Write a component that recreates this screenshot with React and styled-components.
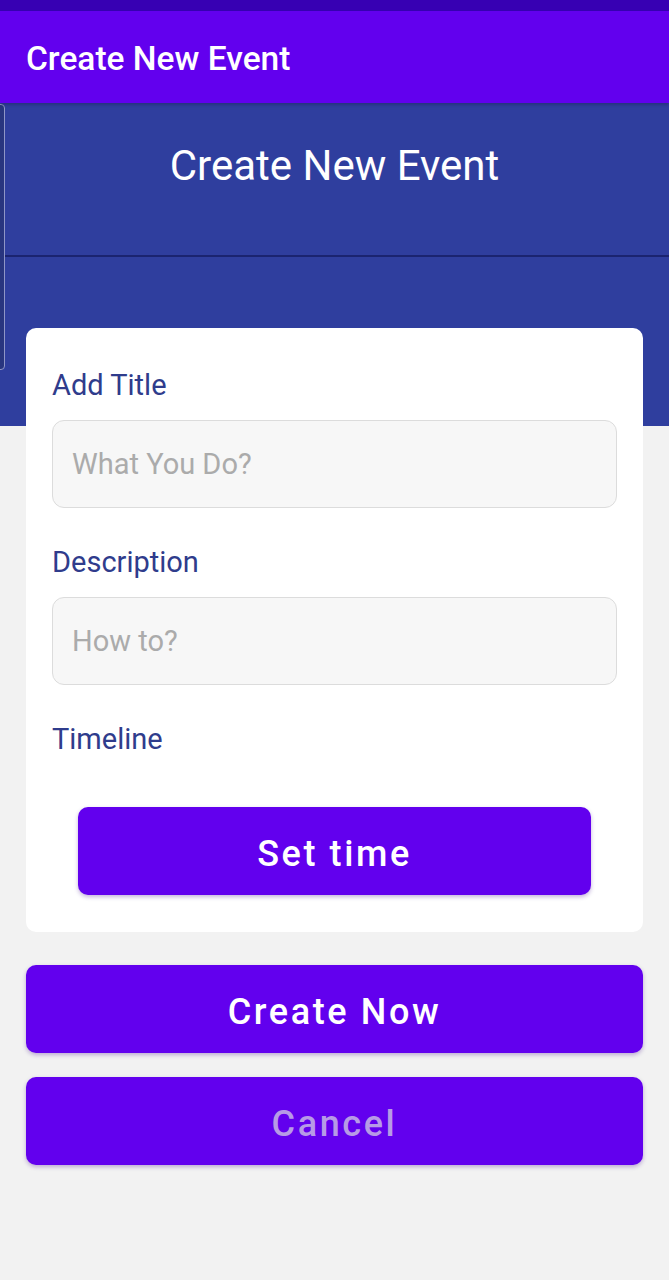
import React from "react";
import styled, { createGlobalStyle } from "styled-components";

const Global = createGlobalStyle`
  html, body { margin: 0; padding: 0; background: #f2f2f2; }
  body { font-family: Roboto, "Noto Sans", "Liberation Sans", sans-serif; }
  * { box-sizing: border-box; }
`;

const Page = styled.div`
  width: 669px;
  min-height: 1280px;
  background: #f2f2f2;
  display: flex;
  flex-direction: column;
`;

const StatusBar = styled.div`
  height: 11px;
  background: #3700b3;
`;

const AppBar = styled.header`
  height: 92px;
  background: #6200ee;
  display: flex;
  align-items: center;
  padding: 3px 0 0 26px;
  color: #fff;
  font-size: 33.5px;
  font-weight: 500;
  box-shadow: 0 2px 3px rgba(0, 0, 0, 0.2);
  position: relative;
  z-index: 2;
`;

const Hero = styled.section`
  position: relative;
  height: 323px;
  background: #2f3e9e;
  display: flex;
  flex-direction: column;
`;

const HeroTitle = styled.h1`
  margin: 0;
  height: 152px;
  padding-top: 38px;
  text-align: center;
  color: #fff;
  font-size: 42px;
  font-weight: 400;
  line-height: 50px;
`;

const Divider = styled.div`
  height: 2px;
  background: #1b2470;
`;

const EdgeTab = styled.div`
  position: absolute;
  left: -5px;
  top: 1px;
  width: 10px;
  height: 266px;
  border: 1px solid #8e95c6;
  border-radius: 4px;
  background: #28357f;
`;

const Body = styled.main`
  padding: 0 26px;
  display: flex;
  flex-direction: column;
  margin-top: -98px;
  position: relative;
`;

const Card = styled.div`
  background: #fff;
  border-radius: 10px;
  padding: 41px 26px 37px;
  display: flex;
  flex-direction: column;
`;

const Label = styled.label`
  display: block;
  color: #2f3c8c;
  font-size: 29px;
  line-height: 32px;
  margin-bottom: ${(p) => p.$gap}px;
`;

const Input = styled.input`
  width: 100%;
  height: 88px;
  background: #f7f7f7;
  border: 1.5px solid #dcdcdc;
  border-radius: 12px;
  padding: 0 19px;
  font-family: inherit;
  font-size: 29px;
  color: #333;
  margin-bottom: 38px;
  outline: none;
  &::placeholder { color: #ababab; }
`;

const Button = styled.button`
  height: 88px;
  margin: ${(p) => p.$margin};
  padding: 6px 0 0;
  border: none;
  border-radius: 10px;
  background: #6200ee;
  color: ${(p) => (p.$muted ? "#b79ae6" : "#fff")};
  font-family: inherit;
  font-size: 36px;
  font-weight: 500;
  letter-spacing: 2.6px;
  box-shadow: 0 2px 4px rgba(60, 0, 140, 0.3);
  cursor: pointer;
`;

export default function App() {
  return (
    <Page>
      <Global />
      <StatusBar />
      <AppBar>Create New Event</AppBar>
      <Hero>
        <EdgeTab />
        <HeroTitle>Create New Event</HeroTitle>
        <Divider />
      </Hero>
      <Body>
        <Card>
          <Label $gap={19}>Add Title</Label>
          <Input placeholder="What You Do?" />
          <Label $gap={19}>Description</Label>
          <Input placeholder="How to?" />
          <Label $gap={52}>Timeline</Label>
          <Button $margin="0 26px">Set time</Button>
        </Card>
        <Button $margin="33px 0 0">Create Now</Button>
        <Button $margin="24px 0 0" $muted>Cancel</Button>
      </Body>
    </Page>
  );
}
